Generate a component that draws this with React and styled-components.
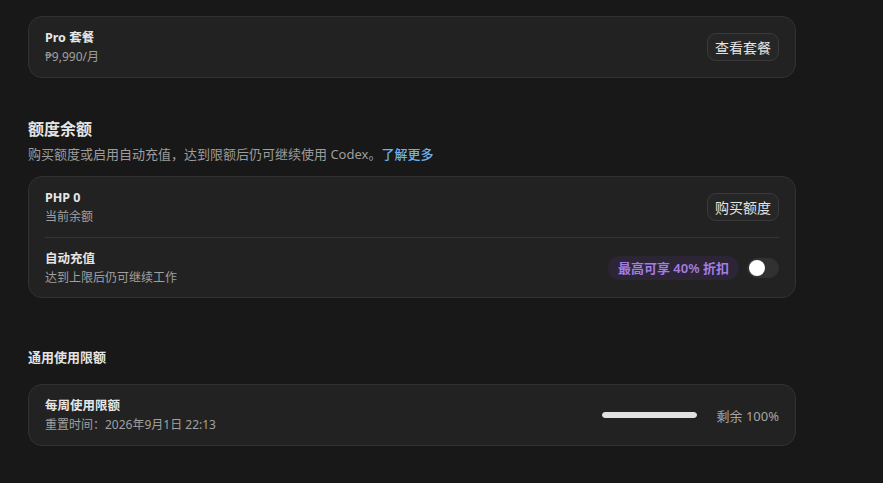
import React, { useState } from 'react'
import styled, { createGlobalStyle } from 'styled-components'

const GlobalStyle = createGlobalStyle`
  html, body {
    margin: 0;
    background: #181818;
  }
  body {
    font-family: "Noto Sans", "Noto Sans CJK SC", sans-serif;
    color: #e8e8e8;
  }
`

const Page = styled.div`
  padding: 16px 28px 20px;
  width: 768px;
`

const Card = styled.div`
  background: #222222;
  border: 1px solid #323232;
  border-radius: 14px;
  padding: 0 16px;
`

const Row = styled.div`
  display: flex;
  align-items: center;
  justify-content: space-between;
  height: ${(p) => (p.$tall ? 60 : 59)}px;
  border-top: ${(p) => (p.$divided ? '1px solid #353535' : 'none')};
`

const Info = styled.div`
  display: flex;
  flex-direction: column;
`

const Title = styled.div`
  font-size: 12.5px;
  font-weight: 700;
  line-height: 19px;
  color: #e6e6e6;
`

const Sub = styled.div`
  font-size: 12px;
  line-height: 19px;
  color: #a0a0a0;
`

const Button = styled.button`
  font-family: inherit;
  font-size: 14px;
  color: #e4e4e4;
  background: #262626;
  border: 1px solid #3a3a3a;
  border-radius: 9px;
  height: 28px;
  padding: 0 7px;
  cursor: pointer;
`

const Section = styled.div`
  margin-top: ${(p) => p.$top}px;
`

const Heading = styled.h2`
  margin: 0;
  font-size: ${(p) => (p.$small ? 13 : 16)}px;
  line-height: 20px;
  font-weight: 700;
  color: #e4e4e4;
  margin-bottom: ${(p) => p.$gap}px;
`

const Lead = styled.p`
  margin: 0 0 12px;
  font-size: 13px;
  line-height: 19px;
  color: #9d9d9d;
`

const Link = styled.a`
  color: #6cb0ee;
  font-weight: 500;
  text-decoration: none;
  cursor: pointer;
`

const Actions = styled.div`
  display: flex;
  align-items: center;
  gap: 8px;
`

const Badge = styled.span`
  font-size: 13px;
  font-weight: 600;
  color: #a47de2;
  background: #2b2535;
  border-radius: 12px;
  height: 24px;
  padding: 0 10px;
  display: flex;
  align-items: center;
`

const Track = styled.button`
  width: 32px;
  height: 20px;
  border: none;
  border-radius: 10px;
  padding: 0;
  background: ${(p) => (p.$on ? '#3b82f6' : '#313131')};
  position: relative;
  cursor: pointer;
`

const Knob = styled.span`
  position: absolute;
  top: 2px;
  left: ${(p) => (p.$on ? 14 : 2)}px;
  width: 16px;
  height: 16px;
  border-radius: 50%;
  background: #ffffff;
  transition: left 0.15s;
`

const Meter = styled.div`
  display: flex;
  align-items: center;
  gap: 19px;
`

const Bar = styled.div`
  width: 95px;
  height: 6px;
  border-radius: 3px;
  background: #3a3a3a;
  overflow: hidden;
`

const Fill = styled.div`
  height: 100%;
  background: #e0e0e0;
  border-radius: 3px;
`

const Remaining = styled.span`
  font-size: 13px;
  color: #a5a5a5;
`

export default function App() {
  const [autoTopUp, setAutoTopUp] = useState(false)
  const remaining = 100

  return (
    <Page>
      <GlobalStyle />
      <Card>
        <Row $tall>
          <Info>
            <Title>Pro 套餐</Title>
            <Sub>₱9,990/月</Sub>
          </Info>
          <Button>查看套餐</Button>
        </Row>
      </Card>

      <Section $top={41}>
        <Heading $gap={6}>额度余额</Heading>
        <Lead>
          购买额度或启用自动充值，达到限额后仍可继续使用 Codex。<Link>了解更多</Link>
        </Lead>
        <Card>
          <Row $tall>
            <Info>
              <Title>PHP 0</Title>
              <Sub>当前余额</Sub>
            </Info>
            <Button>购买额度</Button>
          </Row>
          <Row $divided>
            <Info>
              <Title>自动充值</Title>
              <Sub>达到上限后仍可继续工作</Sub>
            </Info>
            <Actions>
              <Badge>最高可享 40% 折扣</Badge>
              <Track $on={autoTopUp} onClick={() => setAutoTopUp(!autoTopUp)}>
                <Knob $on={autoTopUp} />
              </Track>
            </Actions>
          </Row>
        </Card>
      </Section>

      <Section $top={49}>
        <Heading $small $gap={17}>通用使用限额</Heading>
        <Card>
          <Row $tall>
            <Info>
              <Title>每周使用限额</Title>
              <Sub>重置时间：2026年9月1日 22:13</Sub>
            </Info>
            <Meter>
              <Bar>
                <Fill style={{ width: `${remaining}%` }} />
              </Bar>
              <Remaining>剩余 {remaining}%</Remaining>
            </Meter>
          </Row>
        </Card>
      </Section>
    </Page>
  )
}
